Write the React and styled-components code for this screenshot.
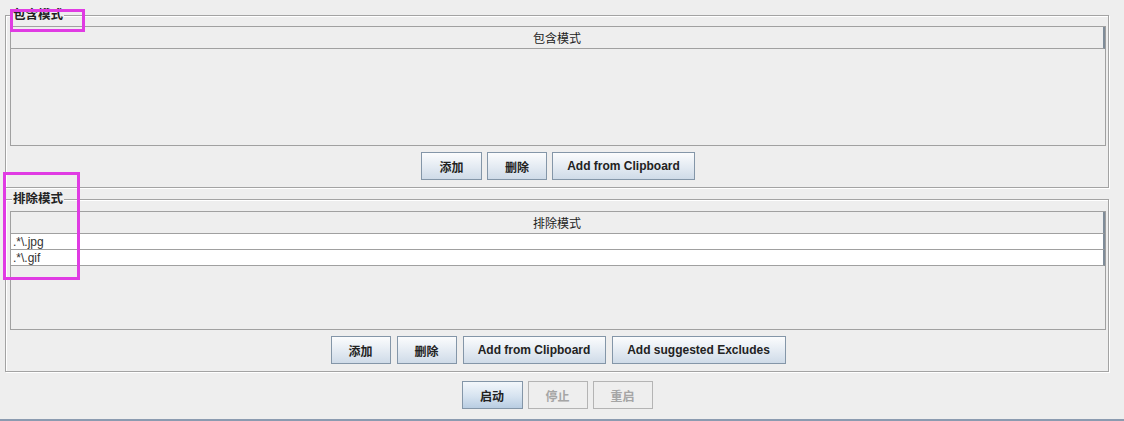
import React from "react";
import styled, { createGlobalStyle } from "styled-components";

const Global = createGlobalStyle`
  html, body { margin: 0; padding: 0; background: #eeeeee; }
  body { font-family: "Liberation Sans", Arial, "Noto Sans CJK SC", sans-serif; }
`;

const Page = styled.div`
  position: relative;
  width: 1124px;
  height: 421px;
  box-sizing: border-box;
  padding: 15px 15px 0 5px;
  background: #eeeeee;
  border-bottom: 2px solid #8b9bb0;
  display: flex;
  flex-direction: column;
  overflow: hidden;
`;

const Group = styled.section`
  position: relative;
  box-sizing: border-box;
  width: 1104px;
  height: 173px;
  margin-top: ${(p) => p.$top || 0}px;
  border: 1px solid #a3a3a3;
  box-shadow: 1px 1px 0 #ffffff, inset 1px 1px 0 #ffffff;
  padding: ${(p) => p.$padTop || 10}px 2px 7px 4px;
  display: flex;
  flex-direction: column;
  align-items: stretch;
`;

const Title = styled.span`
  position: absolute;
  top: -8px;
  left: 6px;
  padding: 0 1px;
  background: #eeeeee;
  font-family: "Liberation Sans", Arial, "Noto Sans CJK SC", sans-serif;
  font-size: 12.5px;
  font-weight: bold;
  line-height: 15px;
  color: #222;
`;

const Table = styled.div`
  box-sizing: border-box;
  height: 120px;
  border: 1px solid #a0a0a0;
  background: #eeeeee;
  display: flex;
  flex-direction: column;
`;

const Header = styled.div`
  box-sizing: border-box;
  height: 22px;
  flex: none;
  border-bottom: 1px solid #a0a0a0;
  border-right: 2px solid #7f8c99;
  background: #eeeeee;
  display: flex;
  align-items: center;
  justify-content: center;
  font-size: 12px;
  color: #222;
`;

const Row = styled.div`
  box-sizing: border-box;
  height: 16px;
  flex: none;
  border-bottom: 1px solid #a0a0a0;
  border-right: 2px solid #7f8c99;
  background: #ffffff;
  padding-left: 2px;
  display: flex;
  align-items: center;
  font-size: 12px;
  color: #333;
`;

const ButtonRow = styled.div`
  display: flex;
  justify-content: center;
  gap: ${(p) => p.$gap || 6}px;
  margin-top: ${(p) => p.$top || 6}px;
`;

const Button = styled.button`
  box-sizing: border-box;
  width: ${(p) => p.$w}px;
  height: 28px;
  padding: 0;
  margin: 0;
  border: 1px solid ${(p) => (p.disabled ? "#b4b4b4" : "#8496a8")};
  border-radius: 0;
  background: ${(p) =>
    p.disabled
      ? "#eeeeee"
      : p.$focus
      ? "linear-gradient(#f3f7fb, #d6e3f0 55%, #b9cde2)"
      : "linear-gradient(#fbfcfd, #e3eaf2 55%, #cfdbe8)"};
  font-family: "Liberation Sans", Arial, "Noto Sans CJK SC", sans-serif;
  font-size: 12px;
  font-weight: bold;
  color: ${(p) => (p.disabled ? "#a5a5a5" : "#222")};
  cursor: default;
`;

const Footer = styled.div`
  display: flex;
  justify-content: center;
  gap: 5px;
  margin-top: 9px;
  width: 1104px;
`;

const Mark = styled.div`
  position: absolute;
  left: ${(p) => p.$x}px;
  top: ${(p) => p.$y}px;
  width: ${(p) => p.$w}px;
  height: ${(p) => p.$h}px;
  box-sizing: border-box;
  border: 3px solid #e03be3;
  pointer-events: none;
`;

export default function App() {
  return (
    <>
      <Global />
      <Page>
        <Group>
          <Title>包含模式</Title>
          <Table>
            <Header>包含模式</Header>
          </Table>
          <ButtonRow $gap={5}>
            <Button $w={61}>添加</Button>
            <Button $w={60}>删除</Button>
            <Button $w={143}>Add from Clipboard</Button>
          </ButtonRow>
        </Group>
        <Group $top={11} $padTop={11}>
          <Title>排除模式</Title>
          <Table>
            <Header>排除模式</Header>
            <Row>.*\.jpg</Row>
            <Row>.*\.gif</Row>
          </Table>
          <ButtonRow $gap={6}>
            <Button $w={60}>添加</Button>
            <Button $w={60}>删除</Button>
            <Button $w={143}>Add from Clipboard</Button>
            <Button $w={174}>Add suggested Excludes</Button>
          </ButtonRow>
        </Group>
        <Footer>
          <Button $w={61} $focus>启动</Button>
          <Button $w={60} disabled>停止</Button>
          <Button $w={60} disabled>重启</Button>
        </Footer>
        <Mark $x={10} $y={9} $w={75} $h={23} />
        <Mark $x={3} $y={172} $w={77} $h={108} />
      </Page>
    </>
  );
}
